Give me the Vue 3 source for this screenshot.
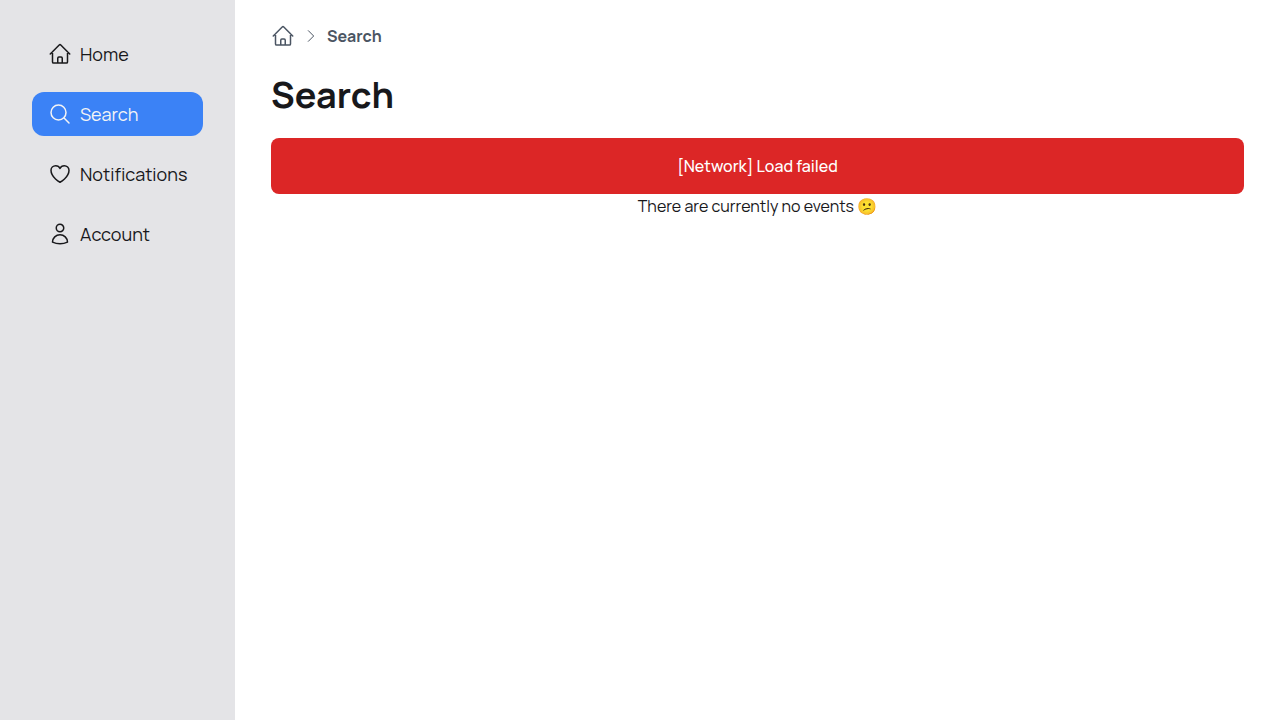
<script setup>
const icons = {
  home: 'm2.25 12 8.954-8.955c.44-.439 1.152-.439 1.591 0L21.75 12M4.5 9.75v10.125c0 .621.504 1.125 1.125 1.125H9.75v-4.875c0-.621.504-1.125 1.125-1.125h2.25c.621 0 1.125.504 1.125 1.125V21h4.125c.621 0 1.125-.504 1.125-1.125V9.75M8.25 21h8.25',
  search: 'm21 21-5.197-5.197m0 0A7.5 7.5 0 1 0 5.196 5.196a7.5 7.5 0 0 0 10.607 10.607Z',
  heart: 'M21 8.25c0-2.485-2.099-4.5-4.688-4.5-1.935 0-3.597 1.126-4.312 2.733-.715-1.607-2.377-2.733-4.313-2.733C5.1 3.75 3 5.765 3 8.25c0 7.22 9 12 9 12s9-4.78 9-12Z',
  user: 'M15.75 6a3.75 3.75 0 1 1-7.5 0 3.75 3.75 0 0 1 7.5 0ZM4.501 20.118a7.5 7.5 0 0 1 14.998 0A17.933 17.933 0 0 1 12 21.75c-2.676 0-5.216-.584-7.499-1.632Z',
  chevron: 'm8 4 8 8-8 8',
}

const items = [
  { label: 'Home', icon: icons.home },
  { label: 'Search', icon: icons.search, active: true },
  { label: 'Notifications', icon: icons.heart },
  { label: 'Account', icon: icons.user },
]
</script>

<template>
  <div class="layout">
    <nav class="sidebar" aria-label="Main">
      <a
        v-for="item in items"
        :key="item.label"
        href="#"
        class="item"
        :class="{ active: item.active }"
        :aria-current="item.active ? 'page' : undefined"
      >
        <svg class="icon" viewBox="0 0 24 24" aria-hidden="true"><path :d="item.icon" /></svg>
        <span>{{ item.label }}</span>
      </a>
    </nav>
    <main class="content">
      <nav class="crumbs" aria-label="Breadcrumb">
        <a href="#" class="crumb" aria-label="Home">
          <svg class="icon" viewBox="0 0 24 24" aria-hidden="true"><path :d="icons.home" /></svg>
        </a>
        <svg class="icon small" viewBox="0 0 24 24" aria-hidden="true"><path :d="icons.chevron" /></svg>
        <a href="#" class="crumb" aria-current="page">Search</a>
      </nav>
      <h1>Search</h1>
      <div class="alert" role="alert">[Network] Load failed</div>
      <p class="empty">There are currently no events 😕</p>
    </main>
  </div>
</template>

<style>
body {
  background: #fff;
}
</style>

<style scoped>
.layout {
  display: flex;
  min-height: 100vh;
  color: #18181b;
  font-family: Manrope, Inter, "Noto Sans", sans-serif;
  font-size: 16px;
  line-height: 24px;
}

.sidebar {
  box-sizing: border-box;
  flex: none;
  width: 235px;
  padding: 32px;
  display: flex;
  flex-direction: column;
  gap: 16px;
  background: #e4e4e7;
}

.item {
  display: flex;
  align-items: center;
  gap: 8px;
  padding: 8px 16px;
  border-radius: 12px;
  color: inherit;
  font-size: 18px;
  line-height: 28px;
  font-weight: 400;
  text-decoration: none;
}

.active {
  background: #3b82f6;
  color: #f4f4f5;
}

.icon {
  flex: none;
  display: block;
  width: 24px;
  height: 24px;
  fill: none;
  stroke: currentColor;
  stroke-width: 1.5;
  stroke-linecap: round;
  stroke-linejoin: round;
}

.small {
  width: 16px;
  height: 16px;
}

.content {
  flex: 1;
  min-width: 0;
  padding: 24px 36px;
}

.crumbs {
  display: flex;
  align-items: center;
  gap: 8px;
  color: #4b5563;
}

.crumb {
  color: inherit;
  font-weight: 700;
  text-decoration: none;
}

h1 {
  margin: 27px 0 23px;
  font-size: 36px;
  line-height: 40px;
  font-weight: 700;
}

.alert {
  padding: 16px;
  border-radius: 8px;
  background: #dc2626;
  color: #fff;
  font-weight: 500;
  text-align: center;
}

.empty {
  margin: 0;
  text-align: center;
}
</style>
